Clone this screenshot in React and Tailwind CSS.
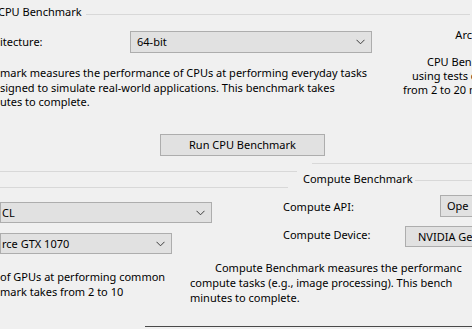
import React from "react";

const Chevron = () => (
  <svg width="9" height="6" viewBox="0 0 9 6" className="shrink-0">
    <path d="M0.5 0.8 L4.5 4.8 L8.5 0.8" fill="none" stroke="#3c3c3c" strokeWidth="1" />
  </svg>
);

const Combo = ({ text, className, textClass = "" }) => (
  <div className={"flex items-center bg-[#e1e1e1] border border-[#adadad] " + className}>
    <span className={"flex-1 whitespace-nowrap overflow-hidden " + textClass}>{text}</span>
    <div className="pr-[6px] flex items-center">
      <Chevron />
    </div>
  </div>
);

export default function App() {
  return (
    <div
      className="w-[472px] h-[329px] overflow-hidden bg-[#f0f0f0] text-[11px] leading-[14px] text-black flex flex-col"
      style={{ fontFamily: '"Noto Sans", "Open Sans", sans-serif' }}
    >
      {/* Title row */}
      <div className="h-[30px] flex items-start pt-[5px]">
        <span className="whitespace-nowrap -ml-[2px]">CPU Benchmark</span>
        <div className="flex-1 h-px bg-[#d8d8d8] mt-[9px] ml-[4px] mr-[2px]" />
      </div>

      {/* Architecture row */}
      <div className="h-[23px] flex items-center">
        <span className="w-[130px] whitespace-nowrap">itecture:</span>
        <Combo text="64-bit" className="w-[242px] h-[22px]" textClass="pl-[6px]" />
        <span className="self-start ml-auto mt-[-2px] whitespace-nowrap">Arc</span>
      </div>

      {/* Description row */}
      <div className="h-[81px] flex">
        <div className="w-[400px] pt-[13px] leading-[14.5px] whitespace-nowrap">
          <div>mark measures the performance of CPUs at performing everyday tasks</div>
          <div>signed to simulate real-world applications. This benchmark takes</div>
          <div>utes to complete.</div>
        </div>
        <div className="flex-1 min-w-0 pt-[2px] leading-[14px] whitespace-nowrap">
          <div className="pl-[27px]">CPU Bench</div>
          <div className="pl-[12px]">using tests o</div>
          <div className="pl-[3px]">from 2 to 20 m</div>
        </div>
      </div>

      {/* Button row */}
      <div className="h-[26px] flex items-start">
        <button className="ml-[160px] w-[165px] h-[22px] bg-[#e1e1e1] border border-[#adadad] flex items-center justify-center whitespace-nowrap">
          Run CPU Benchmark
        </button>
      </div>

      {/* Separator row */}
      <div className="h-[33px] flex flex-col pt-[3px]">
        <div className="ml-[312px] h-px bg-[#d8d8d8]" />
        <div className="flex items-start mt-[7px]">
          <div className="w-[300px] h-[17px] flex flex-col justify-between">
            <div className="w-[297px] h-px bg-[#d8d8d8]" />
            <div className="w-[288px] h-px bg-[#d8d8d8]" />
          </div>
          <span className="mt-[1px] ml-[3px] whitespace-nowrap">Compute Benchmark</span>
          <div className="flex-1 h-px bg-[#d8d8d8] mt-[9px] ml-[2px]" />
        </div>
      </div>

      {/* Compute API row */}
      <div className="h-[32px] flex items-start">
        <Combo text="CL" className="w-[212px] h-[21px] mt-[9px]" textClass="pl-[1px]" />
        <span className="ml-[71px] mt-[7px] whitespace-nowrap">Compute API:</span>
        <div className="ml-auto mt-[2px] w-[32px] h-[22px] bg-[#e1e1e1] border border-[#adadad] border-r-0 flex items-center pl-[6px] whitespace-nowrap overflow-hidden">
          Ope
        </div>
      </div>

      {/* Compute Device row */}
      <div className="h-[33px] flex items-start">
        <Combo text="rce GTX 1070" className="w-[172px] h-[21px] mt-[8px]" textClass="pl-[1px]" />
        <span className="ml-[111px] mt-[3px] whitespace-nowrap">Compute Device:</span>
        <div className="ml-auto mt-[1px] w-[67px] h-[21px] bg-[#e1e1e1] border border-[#adadad] border-r-0 flex items-center pl-[12px] whitespace-nowrap overflow-hidden">
          NVIDIA Ge
        </div>
      </div>

      {/* Bottom descriptions */}
      <div className="h-[63px] flex">
        <div className="w-[190px] pt-[11px] leading-[15px] whitespace-nowrap">
          <div>of GPUs at performing common</div>
          <div>mark takes from 2 to 10</div>
        </div>
        <div className="flex-1 pt-[2px] leading-[15px] whitespace-nowrap">
          <div className="pl-[25px]">Compute Benchmark measures the performanc</div>
          <div>compute tasks (e.g., image processing). This bench</div>
          <div>minutes to complete.</div>
        </div>
      </div>

      {/* Bottom line */}
      <div className="flex-1 flex items-end pb-[2px]">
        <div className="ml-[145px] flex-1 h-px bg-[#4a4a4a]" />
      </div>
    </div>
  );
}
